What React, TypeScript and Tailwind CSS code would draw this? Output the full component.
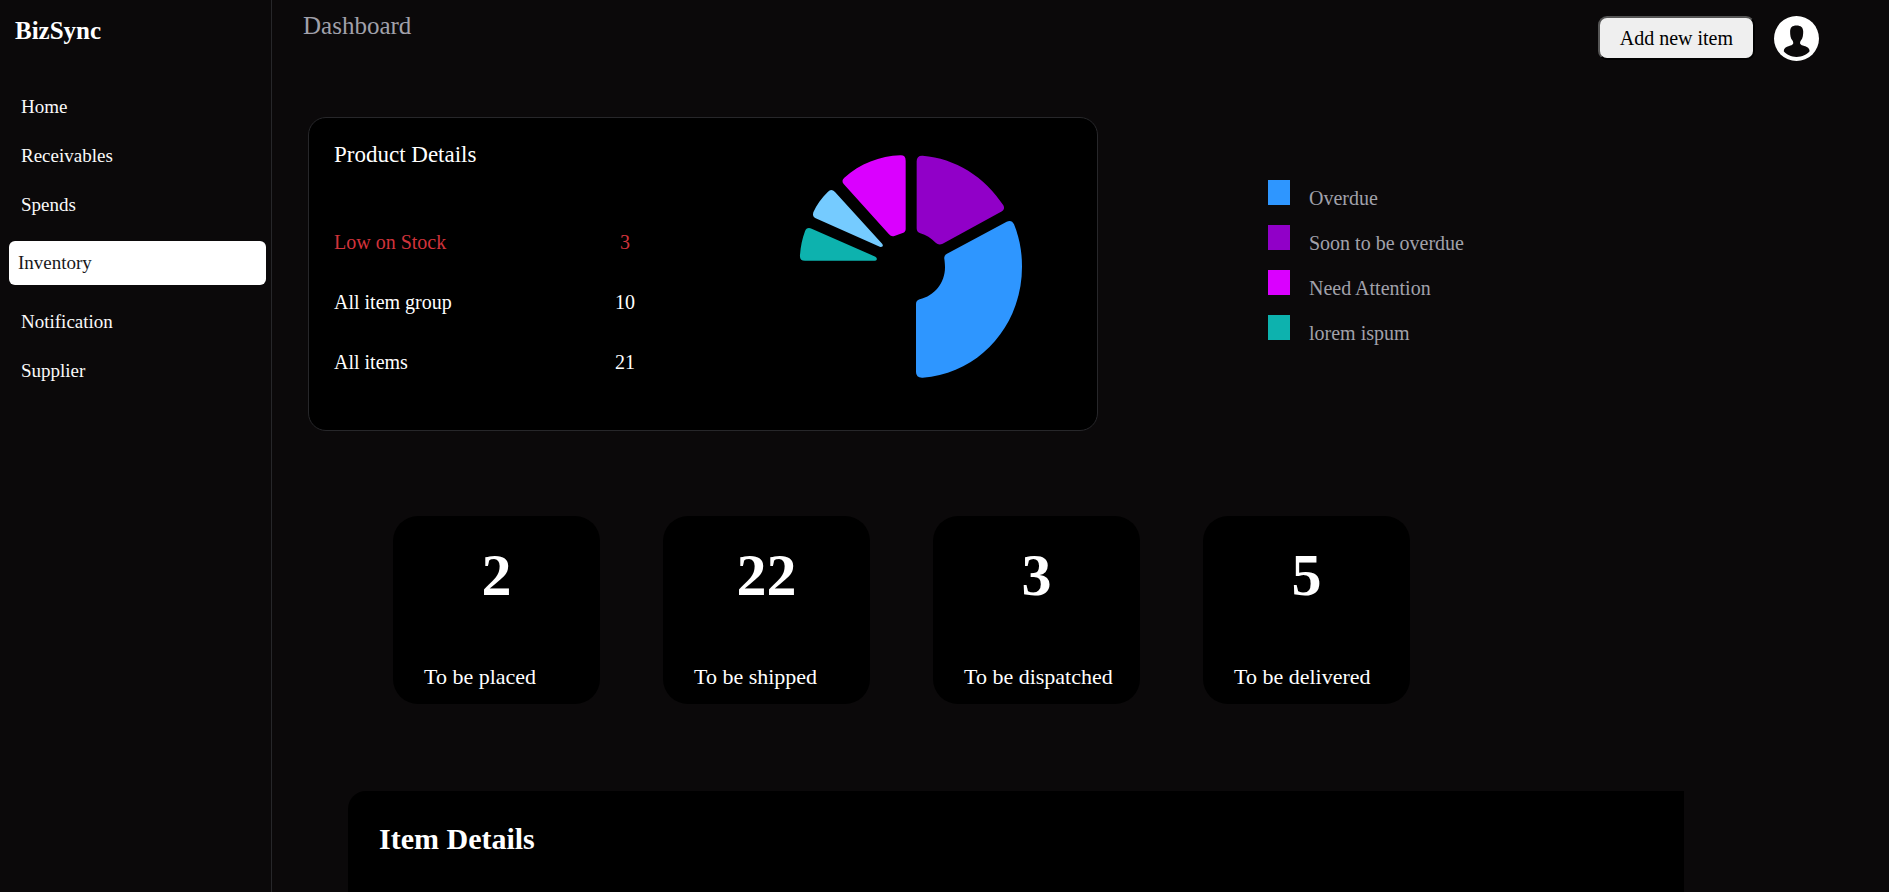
const navBefore = ["Home", "Receivables", "Spends"];
const navAfter = ["Notification", "Supplier"];

const productRows = [
  { label: "Low on Stock", value: 3, color: "text-[#d1333b]" },
  { label: "All item group", value: 10, color: "text-white" },
  { label: "All items", value: 21, color: "text-white" },
];

const legend = [
  { label: "Overdue", color: "bg-[#2e96ff]" },
  { label: "Soon to be overdue", color: "bg-[#9100c8]" },
  { label: "Need Attention", color: "bg-[#da00ff]" },
  { label: "lorem ispum", color: "bg-[#0db2ae]" },
];

const stats = [
  { value: 2, label: "To be placed" },
  { value: 22, label: "To be shipped" },
  { value: 3, label: "To be dispatched" },
  { value: 5, label: "To be delivered" },
];

function NavLink({ label }: { label: string }) {
  return (
    <a href="#" className="block px-3 text-[19px] leading-[49px] text-[#fafafa]">
      {label}
    </a>
  );
}

function Sidebar() {
  return (
    <aside className="w-[272px] shrink-0 border-r border-[#27272a]">
      <h1 className="pt-4 pl-[15px] text-[25px] leading-[30px] font-bold">BizSync</h1>
      <nav className="mt-9 pr-[5px] pl-[9px]">
        {navBefore.map((label) => (
          <NavLink key={label} label={label} />
        ))}
        <a
          href="#"
          aria-current="page"
          className="my-3 block rounded-md bg-white px-[9px] text-[19px] leading-[44px] text-[#18181b]"
        >
          Inventory
        </a>
        {navAfter.map((label) => (
          <NavLink key={label} label={label} />
        ))}
      </nav>
    </aside>
  );
}

function Avatar() {
  return (
    <svg viewBox="0 0 134 134" className="size-[45px]" role="img" aria-label="Profile">
      <circle cx="67" cy="67" r="67" fill="#fff" />
      <path
        d="M67 28C54 28 48 34 48 46C48 56 49 66 55 73C57 76 58 80 57 83C55 87 50 88 45 89C36 91 29 96 29 105C37 115 51 122 67 122C84 122 98 115 106 105C106 96 99 91 90 89C85 88 80 87 78 83C77 80 78 76 80 73C86 66 87 56 87 46C87 34 80 28 67 28Z"
        fill="#0b090a"
      />
    </svg>
  );
}

function PieChart() {
  return (
    <svg viewBox="0 0 810 780" className="h-[260px] w-[270px]" role="img" aria-label="Item status chart">
      <path
        fill="#9100c8"
        d="M410 94Q410 76 428 77C525 85 615 140 670 226Q676 237 666 244L488 341Q476 347 467 338C453 324 438 315 421 310Q410 307 410 295Z"
      />
      <path
        fill="#2e96ff"
        d="M680 275Q695 268 702 283C719 325 726 365 726 410C726 585 600 730 428 743Q408 744 408 726V522Q408 511 419 508C463 498 495 459 495 412C495 403 494 394 493 387Q491 376 501 371Z"
      />
      <path
        fill="#da00ff"
        d="M361 76Q377 75 377 92V297Q377 306 368 309L343 318Q334 321 327 313L191 162Q183 152 193 143C240 101 300 78 361 76Z"
      />
      <path
        fill="#75cbff"
        d="M144 185Q154 175 165 186L307 342Q312 351 301 351L107 265Q96 260 100 247C110 224 125 203 144 185Z"
      />
      <path
        fill="#0db2ae"
        d="M75 304Q80 290 95 296L286 380Q292 384 290 389Q289 392 284 392H75Q58 392 60 375C62 349 67 326 75 304Z"
      />
    </svg>
  );
}

function ProductCard() {
  return (
    <section className="flex w-[790px] justify-between rounded-[18px] border border-[#27272a] bg-black pt-3 pr-[47px] pb-[38px] pl-[25px]">
      <div className="pt-3">
        <h3 className="text-[23px] leading-[26px]">Product Details</h3>
        <table className="mt-11 w-[316px] text-[20px] leading-6">
          <tbody>
            {productRows.map((row) => (
              <tr key={row.label} className={row.color}>
                <th scope="row" className="h-[60px] p-0 text-left font-normal">
                  {row.label}
                </th>
                <td className="w-[50px] p-0 text-center">{row.value}</td>
              </tr>
            ))}
          </tbody>
        </table>
      </div>
      <PieChart />
    </section>
  );
}

function Legend() {
  return (
    <ul className="mt-[63px] flex flex-col gap-[17px]">
      {legend.map((entry) => (
        <li key={entry.label} className="flex items-start gap-[19px]">
          <span className={`h-[25px] w-[22px] ${entry.color}`} />
          <span className="mt-2 text-[20px] leading-5 text-[#a1a1aa]">{entry.label}</span>
        </li>
      ))}
    </ul>
  );
}

export default function App() {
  return (
    <div className="flex min-h-screen bg-[#0b090a] font-['Liberation_Serif','Times_New_Roman',serif] text-white">
      <Sidebar />
      <main className="flex min-w-0 grow flex-col">
        <header className="flex items-start justify-between pt-4 pr-[70px] pl-[31px]">
          <h2 className="text-[25px] leading-5 text-[#a1a1aa]">Dashboard</h2>
          <div className="flex items-start gap-[19px]">
            <button
              type="button"
              className="rounded-[9px] border-2 border-t-[#555] border-r-black border-b-black border-l-[#555] bg-[#efefef] px-5 text-[20px] leading-[40px] text-black"
            >
              Add new item
            </button>
            <Avatar />
          </div>
        </header>

        <div className="mt-14 flex items-start gap-[170px] pl-9">
          <ProductCard />
          <Legend />
        </div>

        <div className="mt-[85px] flex gap-[63px] pl-[121px]">
          {stats.map((stat) => (
            <section
              key={stat.label}
              className="flex h-[188px] w-[207px] flex-col justify-between rounded-[25px] bg-black pt-[29px] pb-[15px]"
            >
              <p className="text-center text-[60px] leading-[60px] font-bold">{stat.value}</p>
              <p className="pl-[31px] text-[22px] leading-6 whitespace-nowrap">{stat.label}</p>
            </section>
          ))}
        </div>

        <section className="mt-[87px] mr-[205px] ml-[76px] grow rounded-tl-[18px] bg-black pt-8 pl-[31px]">
          <h2 className="text-[30px] leading-8 font-bold">Item Details</h2>
        </section>
      </main>
    </div>
  );
}
